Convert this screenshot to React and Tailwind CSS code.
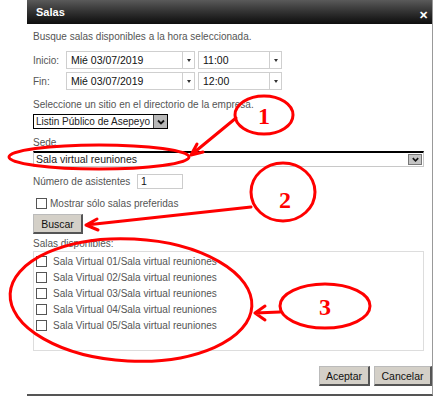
import React from 'react';

const font = { fontFamily: '"Liberation Sans", Arial, sans-serif' };

const Chevron = ({ className = '' }) => (
  <svg viewBox="0 0 10 10" className={className}>
    <path d="M2 3.5 L5 6.5 L8 3.5" fill="none" stroke="#111" strokeWidth="1.8" />
  </svg>
);

const Combo = ({ value, w }) => (
  <div className={`flex h-[18px] ${w} border border-[#cfcfcf] bg-white`}>
    <div className="flex-1 whitespace-nowrap pl-[4px] text-[10.5px] leading-[16px] text-[#111]">{value}</div>
    <div className="flex w-[12px] items-center justify-center border-l border-[#cfcfcf]">
      <div className="h-0 w-0 border-x-[2px] border-t-[3px] border-x-transparent border-t-[#333]" />
    </div>
  </div>
);

const Box = () => <div className="h-[11px] w-[11px] shrink-0 border border-[#555] bg-white" />;

const salas = [
  'Sala Virtual 01/Sala virtual reuniones',
  'Sala Virtual 02/Sala virtual reuniones',
  'Sala Virtual 03/Sala virtual reuniones',
  'Sala Virtual 04/Sala virtual reuniones',
  'Sala Virtual 05/Sala virtual reuniones',
];

const Annotations = () => (
  <svg className="pointer-events-none absolute left-0 top-0" width="434" height="398" viewBox="0 0 434 398">
    <g fill="none" stroke="#f00" strokeWidth="3" strokeLinecap="round">
      <ellipse cx="264" cy="115" rx="29" ry="19" />
      <path d="M236 118 L191 155 M191 155 L197 144 M191 155 L203 152" />
      <ellipse cx="99" cy="157" rx="90" ry="12" />
      <ellipse cx="283" cy="192" rx="32" ry="29" />
      <path d="M251 207 L86 225 M86 225 L97 219 M86 225 L98 230" />
      <ellipse cx="131" cy="300" rx="121" ry="61" transform="rotate(3 131 300)" />
      <ellipse cx="325" cy="306" rx="45" ry="22" />
      <path d="M280 312 L255 313 M255 313 L265 306 M255 313 L265 320" />
    </g>
    <g fill="#f00" fontFamily='"Liberation Serif", serif' fontWeight="bold" fontSize="24" textAnchor="middle">
      <text x="264" y="124">1</text>
      <text x="285" y="208">2</text>
      <text x="325" y="315">3</text>
    </g>
  </svg>
);

const btn =
  'h-[20px] border border-b-2 border-r-2 border-[#555] border-l-[#bbb] border-t-[#bbb] bg-[#d4d0c8] text-[10.5px] leading-[16px] text-[#111]';

export default function App() {
  return (
    <div className="relative h-[398px] w-[434px] overflow-hidden bg-white" style={font}>
      <div className="ml-[27px] h-[396px] w-[406px] border-b-2 border-r border-b-[#555] border-r-[#999] bg-white">
        <div className="flex h-[24px] items-center justify-between bg-gradient-to-b from-[#5a5a5a] to-[#0e0e0e] pl-[9px] pr-[4px]">
          <span className="text-[11px] font-bold text-white">Salas</span>
          <span className="mt-[6px] text-[11px] font-bold leading-none text-white">✕</span>
        </div>

        <div className="whitespace-nowrap pl-[6px] pr-[8px] text-[10px] text-[#555]">
          <div className="mt-[6px] h-[14px] leading-[14px]">Busque salas disponibles a la hora seleccionada.</div>

          <div className="mt-[7px] flex items-center">
            <span className="w-[33px]">Inicio:</span>
            <Combo value="Mié 03/07/2019" w="w-[129px]" />
            <div className="w-[3px]" />
            <Combo value="11:00" w="w-[84px]" />
          </div>
          <div className="mt-[3px] flex items-center">
            <span className="w-[33px]">Fin:</span>
            <Combo value="Mié 03/07/2019" w="w-[129px]" />
            <div className="w-[3px]" />
            <Combo value="12:00" w="w-[84px]" />
          </div>

          <div className="mt-[8px] h-[14px] leading-[14px]">Seleccione un sitio en el directorio de la empresa.</div>
          <div className="mt-[2px] flex h-[15px] w-[135px] border border-black bg-white">
            <div className="flex-1 overflow-hidden pl-[2px] text-[10px] leading-[13px] text-[#222]">Listin Público de Asepeyo</div>
            <div className="flex w-[14px] items-center justify-center border-l border-[#444] bg-[#b8b8b8]">
              <Chevron className="h-[10px] w-[10px]" />
            </div>
          </div>

          <div className="mt-[7px] h-[14px] leading-[14px]">Sede</div>
          <div className="mt-[1px] flex h-[16px] w-[391px] border border-t-2 border-[#c8c8c8] border-t-black bg-white">
            <div className="flex-1 pl-[2px] text-[10.5px] leading-[13px] text-[#222]">Sala virtual reuniones</div>
            <div className="mr-[1px] mt-[1px] flex h-[11px] w-[14px] items-center justify-center border border-[#777] bg-[#c4c4c4]">
              <Chevron className="h-[9px] w-[9px]" />
            </div>
          </div>

          <div className="mt-[7px] flex h-[15px] items-center">
            <span className="w-[104px]">Número de asistentes</span>
            <div className="h-[15px] w-[46px] border border-[#ccc] pl-[3px] text-[10.5px] leading-[13px] text-[#111]">1</div>
          </div>

          <div className="mt-[9px] flex h-[11px] items-center gap-[3px] pl-[3px]">
            <Box />
            <span className="leading-[13px]">Mostrar sólo salas preferidas</span>
          </div>

          <button className={`mt-[5px] block w-[50px] ${btn}`}>Buscar</button>

          <div className="mt-[3px] h-[14px] leading-[14px]">Salas disponibles:</div>
          <div className="h-[100px] w-[391px] border border-[#ddd] pt-[1px]">
            {salas.map((s) => (
              <div key={s} className="flex h-[16px] items-center gap-[6px] pl-[2px]">
                <Box />
                <span className="leading-[13px]">{s}</span>
              </div>
            ))}
          </div>

          <div className="mr-[-8px] mt-[15px] flex justify-end gap-[4px]">
            <button className={`w-[51px] ${btn}`}>Aceptar</button>
            <button className={`w-[58px] ${btn}`}>Cancelar</button>
          </div>
        </div>
      </div>
      <Annotations />
    </div>
  );
}
